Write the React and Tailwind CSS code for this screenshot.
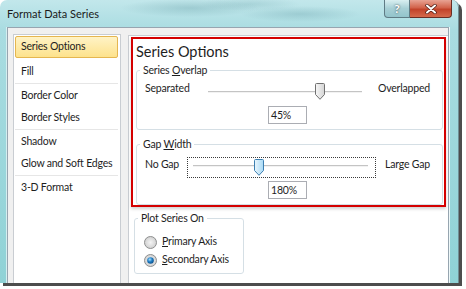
import React from "react";

const Thumb = ({ blue }) => (
  <svg width="10" height="17" viewBox="0 0 10 17">
    <defs>
      <linearGradient id={blue ? "thb" : "thg"} x1="0" y1="0" x2="1" y2="0">
        <stop offset="0" stopColor={blue ? "#eaf6fd" : "#f7f7f7"} />
        <stop offset="1" stopColor={blue ? "#a7d9f5" : "#d4d4d4"} />
      </linearGradient>
    </defs>
    <path
      d="M1.5 0.5 H8.5 A1 1 0 0 1 9.5 1.5 V11.5 L5 16.3 L0.5 11.5 V1.5 A1 1 0 0 1 1.5 0.5Z"
      fill={`url(#${blue ? "thb" : "thg"})`}
      stroke={blue ? "#3c7fb1" : "#707070"}
      strokeWidth="1"
    />
  </svg>
);

const Radio = ({ checked }) => (
  <svg width="13" height="13" viewBox="0 0 13 13" className="shrink-0">
    <defs>
      <radialGradient id="rbg" cx="0.5" cy="0.5" r="0.6">
        <stop offset="0" stopColor="#f4f4f4" />
        <stop offset="1" stopColor="#c9c9c9" />
      </radialGradient>
      <radialGradient id="rdot" cx="0.4" cy="0.35" r="0.7">
        <stop offset="0" stopColor="#a9e1ff" />
        <stop offset="0.5" stopColor="#1f7dc4" />
        <stop offset="1" stopColor="#0a4c86" />
      </radialGradient>
    </defs>
    <circle cx="6.5" cy="6.5" r="6" fill="url(#rbg)" stroke="#8e8f8f" strokeWidth="1" />
    {checked && <circle cx="6.5" cy="6.5" r="3.3" fill="url(#rdot)" />}
  </svg>
);

const Legend = ({ children }) => (
  <legend className="ml-[3px] px-[3px] text-[10.5px] leading-[14px] text-[#1e1e1e]">{children}</legend>
);

const items = [
  [{ t: "Series Options", sel: true }, { t: "Fill" }],
  [{ t: "Border Color" }, { t: "Border Styles" }],
  [{ t: "Shadow" }, { t: "Glow and Soft Edges" }],
  [{ t: "3-D Format" }],
];

export default function App() {
  return (
    <div className="w-[466px] h-[289px] bg-white overflow-hidden whitespace-nowrap font-['Lato','Liberation_Sans',sans-serif] tracking-[-0.2px] text-[#1e1e1e]">
      <div className="w-[459px] h-[283px] rounded-t-[7px] shadow-[3px_3px_0_#4d4d4d] bg-[image:radial-gradient(ellipse_70px_9px_at_190px_8px,rgba(80,140,150,0.28),transparent),radial-gradient(ellipse_60px_8px_at_300px_14px,rgba(80,140,150,0.25),transparent),radial-gradient(ellipse_50px_7px_at_250px_4px,rgba(80,140,150,0.2),transparent),linear-gradient(to_bottom,#c2e7eb,#a9dce1_30px,#8fd2d6)] border-r border-[#6f8f95] flex flex-col overflow-hidden">
        {/* title bar */}
        <div className="h-[27px] flex items-start shrink-0">
          <div className="pl-[7px] pt-[6px] text-[11px] leading-[16px] tracking-normal text-[#1a1a1a]">Format Data Series</div>
          <div className="ml-auto mr-[6px] flex">
            <div className="w-[26px] h-[18px] rounded-bl-[4px] border border-t-0 border-[#5f7b84] bg-[linear-gradient(to_bottom,#d9eff1,#a7cfd5_50%,#93c4cb)] flex items-center justify-center">
              <span className="text-[12px] leading-[12px] font-bold text-white [text-shadow:0_0_2px_#233]">?</span>
            </div>
            <div className="w-[42px] h-[18px] rounded-br-[4px] border border-l-0 border-t-0 border-[#6a2e24] bg-[linear-gradient(to_bottom,#e8a393,#d2634b_45%,#c2432a_55%,#d56a4c)] flex items-center justify-center">
              <svg width="12" height="10" viewBox="0 0 12 10">
                <path d="M2 1.5 L10 8.5 M10 1.5 L2 8.5" stroke="#4a1a12" strokeWidth="3.4" strokeLinecap="round" />
                <path d="M2 1.5 L10 8.5 M10 1.5 L2 8.5" stroke="#ffffff" strokeWidth="2" strokeLinecap="round" />
              </svg>
            </div>
          </div>
        </div>
        {/* client area */}
        <div className="flex-1 ml-[7px] mr-[9px] flex bg-[#f0f0f0] border border-b-0 border-[#97a5b0] shadow-[1px_0_0_#eef8f9,-1px_0_0_#d4eef0]">
          {/* left list */}
          <div className="ml-[5px] mt-[6px] w-[108px] shrink-0 bg-white border border-b-0 border-[#c9cdd2] pt-[1px] pl-[1px] pr-[2px] flex flex-col">
            {items.map((g, gi) => (
              <div key={gi} className="flex flex-col">
                {gi > 0 && <div className="h-[2px] border-t border-[#e6e6e6]" />}
                {g.map((it) => (
                  <div
                    key={it.t}
                    className={
                      it.sel
                        ? "h-[22px] mb-[3px] pl-[5px] flex items-center text-[10.5px] rounded-[2px] border border-[#e5b650] bg-[linear-gradient(to_bottom,#fff3c6,#fde28c)]"
                        : "h-[22px] pl-[6px] flex items-center text-[10.5px]"
                    }
                  >
                    {it.t}
                  </div>
                ))}
              </div>
            ))}
          </div>
          {/* right pane */}
          <div className="ml-[7px] mt-[7px] flex-1 bg-white border-l border-t border-[#c9cdd2] pl-[2px] pr-[2px] pt-[1px] flex flex-col">
            <div className="border-2 border-[#d40000] shadow-[0_2px_3px_rgba(0,0,0,0.18)] pl-[3px] pr-[1px] flex flex-col">
              <div className="mt-[3px] h-[20px] text-[14.5px] leading-[20px] tracking-normal text-[#1e1e1e]">Series Options</div>
              {/* Series overlap */}
              <fieldset className="mt-[1px] border border-[#d5dfe5] rounded-[3px] pb-[5px]">
                <Legend>
                  Series <u>O</u>verlap
                </Legend>
                <div className="mt-[2px] h-[18px] pl-[8px] flex items-start">
                  <div className="w-[63px] shrink-0 text-[10.5px] leading-[18px]">Separated</div>
                  <div className="relative w-[154px] shrink-0 h-[18px]">
                    <div className="mt-[12px] h-[2px] bg-[#c4c4c4] border-b border-[#f2f2f2]" />
                    <div className="absolute left-[107px] top-[4px]">
                      <Thumb />
                    </div>
                  </div>
                  <div className="ml-[16px] text-[10.5px] leading-[18px]">Overlapped</div>
                </div>
                <div className="mt-[9px] ml-[131px] w-[39px] h-[18px] border border-[#abadb3] pl-[2px] text-[10.5px] leading-[16px]">45%</div>
              </fieldset>
              {/* Gap width */}
              <fieldset className="mt-[7px] border border-[#d5dfe5] rounded-[3px] pb-[5px]">
                <Legend>
                  Gap <u>W</u>idth
                </Legend>
                <div className="mt-[6px] h-[21px] pl-[8px] flex items-start">
                  <div className="w-[42px] shrink-0 text-[10.5px] leading-[14px]">No Gap</div>
                  <div className="relative w-[189px] shrink-0 h-[21px] border border-dotted border-[#3a3a3a] pl-[5px] pr-[7px]">
                    <div className="mt-[7px] h-[2px] bg-[#c4c4c4] border-b border-[#f2f2f2]" />
                    <div className="absolute left-[66px] top-[1px]">
                      <Thumb blue />
                    </div>
                  </div>
                  <div className="ml-[9px] text-[10.5px] leading-[14px]">Large Gap</div>
                </div>
                <div className="mt-[3px] ml-[131px] w-[39px] h-[18px] border border-[#abadb3] pl-[2px] text-[10.5px] leading-[16px]">180%</div>
              </fieldset>
            </div>
            {/* Plot series on */}
            <fieldset className="mt-[4px] ml-[3px] w-[110px] border border-[#d5dfe5] rounded-[3px] pb-[4px]">
              <Legend>Plot Series On</Legend>
              <div className="mt-[8px] h-[18px] pl-[9px] flex items-center gap-[5px] text-[10.5px]">
                <Radio />
                <span>
                  <u>P</u>rimary Axis
                </span>
              </div>
              <div className="h-[18px] pl-[9px] flex items-center gap-[5px] text-[10.5px]">
                <Radio checked />
                <span>
                  <u>S</u>econdary Axis
                </span>
              </div>
            </fieldset>
          </div>
        </div>
      </div>
    </div>
  );
}
